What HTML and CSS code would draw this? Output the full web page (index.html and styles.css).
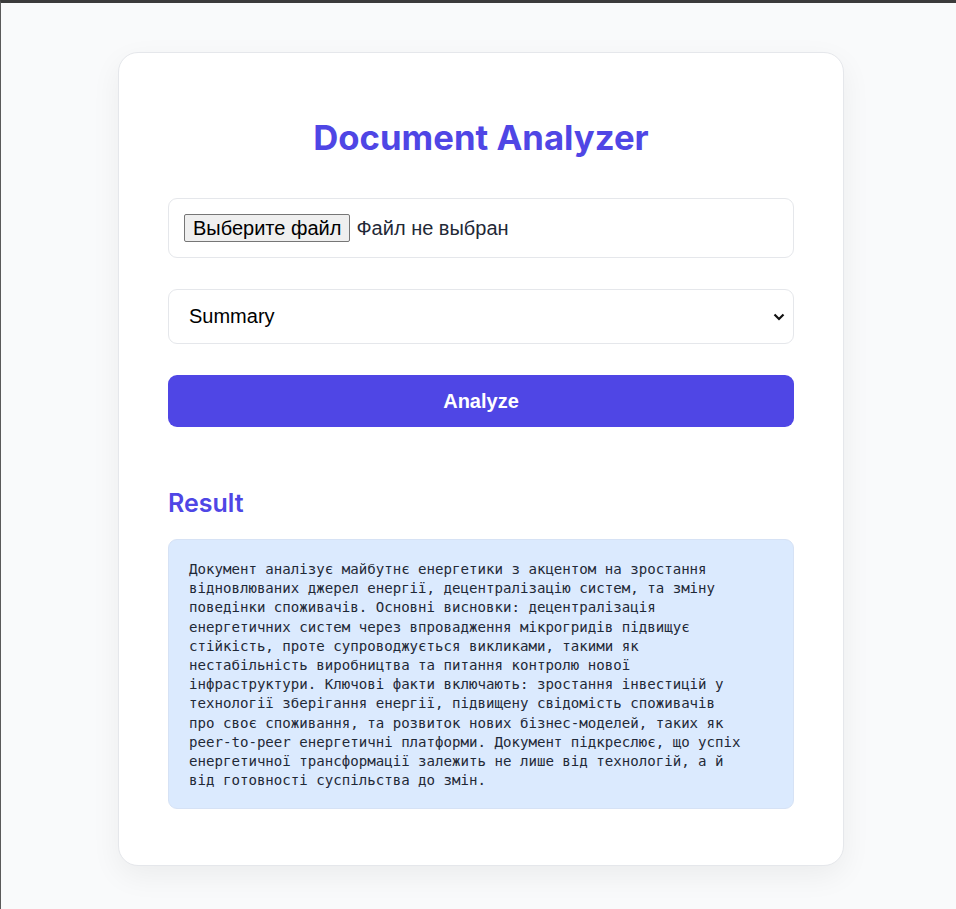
FILE: index.html
```html
<!DOCTYPE html>
<html lang="uk">
<head>
<meta charset="utf-8">
<title>Document Analyzer</title>
<link rel="stylesheet" href="styles.css">
</head>
<body>
<main class="card">
  <h1 class="title">Document Analyzer</h1>
  <div class="file-box">
    <span class="file-btn">Выберите файл</span><span class="file-label">Файл не выбран</span>
  </div>
  <div class="select-box">
    <span class="select-value">Summary</span>
    <svg class="chevron" width="12" height="8" viewBox="0 0 12 8"><path d="M1.5 1.5 L6 6 L10.5 1.5" fill="none" stroke="#111" stroke-width="2.2"/></svg>
  </div>
  <button class="analyze">Analyze</button>
  <h2 class="result-title">Result</h2>
  <pre class="result">Документ аналізує майбутнє енергетики з акцентом на зростання
відновлюваних джерел енергії, децентралізацію систем, та зміну
поведінки споживачів. Основні висновки: децентралізація
енергетичних систем через впровадження мікрогридів підвищує
стійкість, проте супроводжується викликами, такими як
нестабільність виробництва та питання контролю нової
інфраструктури. Ключові факти включають: зростання інвестицій у
технології зберігання енергії, підвищену свідомість споживачів
про своє споживання, та розвиток нових бізнес-моделей, таких як
peer-to-peer енергетичні платформи. Документ підкреслює, що успіх
енергетичної трансформації залежить не лише від технологій, а й
від готовності суспільства до змін.</pre>
</main>
</body>
</html>
```
FILE: styles.css
```css
html {
  border-top: 3px solid #3b3b3b;
  border-left: 1px solid #5a5a5a;
  min-height: 100%;
  box-sizing: border-box;
  background: #f9fafb;
}
body {
  margin: 0;
  padding: 49px 0 40px 5px;
  font-family: "Inter", "Liberation Sans", sans-serif;
  background: #f9fafb;
}
.card {
  box-sizing: border-box;
  width: 726px;
  margin: 0 auto;
  background: #fff;
  border: 1px solid #e5e7eb;
  border-radius: 20px;
  padding: 49px 49px 56px;
  box-shadow: 0 10px 30px rgba(0, 0, 0, 0.06);
}
.title {
  margin: 13px 0 39px;
  text-align: center;
  font-size: 34.7px;
  font-weight: 700;
  color: #4f46e5;
  line-height: 44px;
}
.file-box {
  box-sizing: border-box;
  height: 60px;
  border: 1px solid #e5e7eb;
  border-radius: 9px;
  padding: 15px;
  display: flex;
  align-items: center;
  font-family: "Liberation Sans", Arial, sans-serif;
  font-size: 20px;
  color: #1f2937;
}
.file-btn {
  box-sizing: border-box;
  height: 28px;
  display: inline-flex;
  align-items: center;
  padding: 0 8px;
  background: #efefef;
  border: 1px solid #767676;
  border-radius: 2px;
  color: #000;
  margin-right: 6px;
}
.select-box {
  box-sizing: border-box;
  margin-top: 31px;
  height: 55px;
  border: 1px solid #e5e7eb;
  border-radius: 9px;
  padding: 0 8px 0 20px;
  display: flex;
  align-items: center;
  justify-content: space-between;
  font-family: "Liberation Sans", Arial, sans-serif;
  font-size: 20px;
  color: #000;
}
.chevron { display: block; }
.analyze {
  display: block;
  width: 100%;
  margin-top: 31px;
  height: 52px;
  border: 0;
  border-radius: 9px;
  background: #4f46e5;
  color: #fff;
  font-family: "Liberation Sans", Arial, sans-serif;
  font-weight: 700;
  font-size: 20px;
}
.result-title {
  margin: 60px 0 20px;
  font-size: 25px;
  font-weight: 600;
  color: #4f46e5;
  line-height: 32px;
}
.result {
  margin: 0;
  background: #dbeafe;
  border: 1px solid #d6e2f5;
  border-radius: 9px;
  padding: 20px 20px 18px;
  font-family: "DejaVu Sans Mono", "Liberation Mono", monospace;
  font-size: 14.1px;
  line-height: 19.2px;
  color: #1f2937;
  white-space: pre-wrap;
}
```
